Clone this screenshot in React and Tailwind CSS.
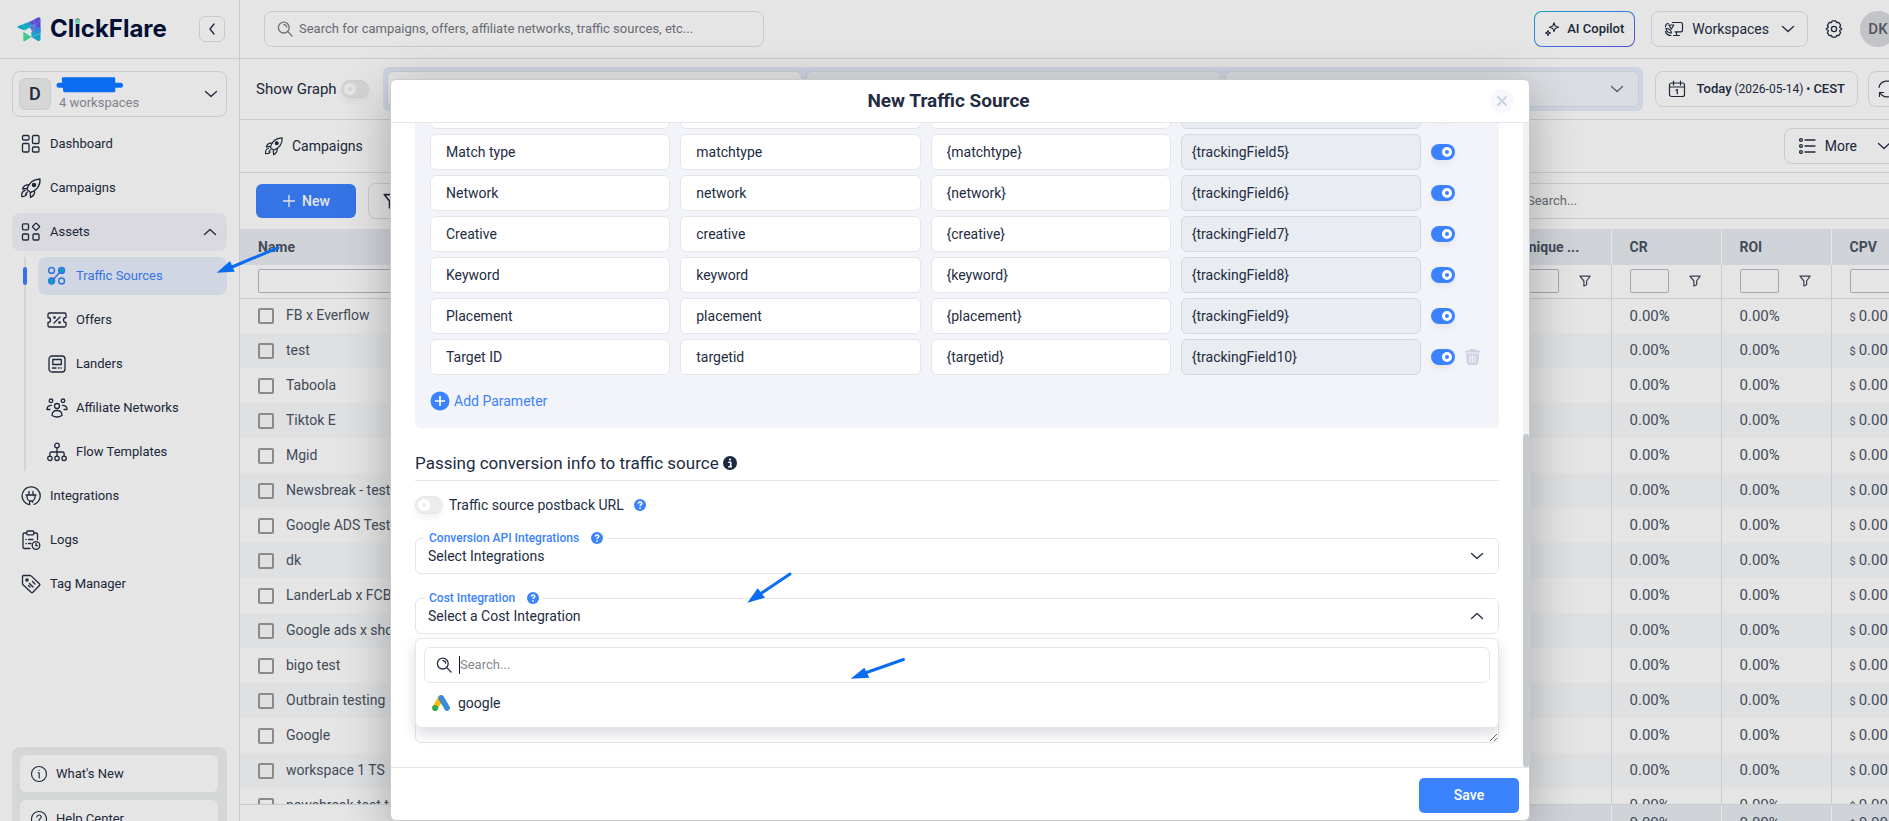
const cx = (...parts) => parts.filter(Boolean).join(" ");

function Icon({ size = 20, w = 1.3, children, className, box = 20 }) {
  return (
    <svg width={size} height={size} viewBox={`0 0 ${box} ${box}`} fill="none" stroke="currentColor" strokeWidth={w} strokeLinecap="round" strokeLinejoin="round" className={cx("shrink-0", className)} aria-hidden="true">
      {children}
    </svg>
  );
}

const Chevron = ({ up, className }) => (
  <svg width="14" height="8" viewBox="0 0 14 8" fill="none" stroke="currentColor" strokeWidth="1.3" strokeLinecap="round" strokeLinejoin="round" className={cx("shrink-0", className)} aria-hidden="true">
    <path d={up ? "M1.5 6.5 7 1.5l5.5 5" : "M1.5 1.5 7 6.5l5.5-5"} />
  </svg>
);

const DashboardIcon = () => (
  <Icon>
    <rect x="1.500" y="1.500" width="6.500" height="4.500" rx="1.200" />
    <rect x="11.500" y="1.500" width="6.500" height="8" rx="1.200" />
    <rect x="1.500" y="9.500" width="6.500" height="8.500" rx="1.200" />
    <rect x="11.500" y="13" width="6.500" height="5" rx="1.200" />
  </Icon>
);

const RocketIcon = ({ size = 22 }) => (
  <Icon size={size} box={22}>
    <path d="M7 12.500c1-4.500 4.500-10 13-10.500.5 7-4 12-9.500 13.500z" />
    <circle cx="14" cy="8" r="1.600" fill="currentColor" />
    <path d="M9 8C6 7.500 3.500 9 2.500 12l4-.5M14.500 13.500c.5 3-1 5.500-4 7l-.2-4.500" />
    <path d="M7.500 15 5.500 17M5 13.500c-2.500.5-3.500 3-3.300 6 2.500.2 4-.3 5-1.800" />
  </Icon>
);

const AssetsIcon = () => (
  <Icon>
    <rect x="1.500" y="1.800" width="6" height="6" rx="1" />
    <rect x="1.500" y="12" width="6" height="6" rx="1" />
    <rect x="12" y="12" width="6" height="6" rx="1" />
    <rect x="12.400" y="2" width="5.400" height="5.400" rx="1" transform="rotate(45 15.100 4.700)" />
  </Icon>
);

const SourcesIcon = () => (
  <Icon w={1.5}>
    <circle cx="4.600" cy="4.400" r="2.900" />
    <circle cx="14.600" cy="4.400" r="2.900" fill="#06b6d4" />
    <circle cx="4.600" cy="15" r="2.900" fill="#06b6d4" />
    <circle cx="14.600" cy="15" r="2.900" />
    <path d="M6.800 12.800 12.500 6.700" />
  </Icon>
);

const OffersIcon = () => (
  <Icon size={22} box={22}>
    <path d="M2 5.500q0-1.500 1.500-1.500h15q1.500 0 1.500 1.500v3a2.500 2.500 0 0 0 0 5v3q0 1.500-1.500 1.500h-15Q2 18 2 16.500v-3a2.500 2.500 0 0 0 0-5z" />
    <path d="m8 14 6-6" />
    <circle cx="8.500" cy="8.500" r=".7" fill="currentColor" />
    <circle cx="13.500" cy="13.500" r=".7" fill="currentColor" />
  </Icon>
);

const LandersIcon = () => (
  <Icon>
    <rect x="2" y="2" width="16" height="16" rx="3" />
    <rect x="5.800" y="5.500" width="8.500" height="5" />
    <path d="M5.500 14h3.500M11.500 14h.8M14.300 14h.2" />
  </Icon>
);

const NetworksIcon = () => (
  <Icon size={22} box={22}>
    <circle cx="11" cy="9" r="2.500" />
    <circle cx="5" cy="3.800" r="1.800" />
    <circle cx="17" cy="3.800" r="1.800" />
    <path d="M6 18.500c0-3.200 2-5 5-5s5 1.800 5 5q-5 3-10 0zM1 12.500C.8 10 2.500 8.300 5.500 8.300M21 12.500c.2-2.500-1.500-4.200-4.500-4.200M1 12.500h3M18 12.500h3" />
  </Icon>
);

const FlowIcon = () => (
  <Icon>
    <circle cx="10" cy="3.500" r="2.300" />
    <circle cx="2.900" cy="16.300" r="2.200" />
    <circle cx="10" cy="16.300" r="2.200" />
    <circle cx="17.100" cy="16.300" r="2.200" />
    <path d="M10 6v8M2.900 14v-2.500Q2.900 10 4.400 10h11.200q1.500 0 1.500 1.500V14" />
  </Icon>
);

const PlugIcon = () => (
  <Icon>
    <path d="M8.500 18.700a9 9 0 1 1 4.500-.3M5 9h10M6 9v2a4 4 0 0 0 8 0V9M8 9V5.500M12 9V5.500M8.600 15v3.700M11.600 15v1.200" />
  </Icon>
);

const LogsIcon = () => (
  <Icon>
    <path d="M5.500 3H3.300Q2 3 2 4.500v12.800Q2 18.500 3.300 18.500H9M13 3h2.200q1.300 0 1.300 1.500v5" />
    <rect x="5.800" y="1" width="7" height="3.800" rx="1" />
    <path d="M5 9.500h.2M7.500 9.500H12M5 13.500h.2M7.500 13.500H10" />
    <circle cx="15" cy="15.500" r="3.800" />
    <path d="M15 13.500v2.200h1.500" />
  </Icon>
);

const TagIcon = () => (
  <Icon>
    <path d="M1.500 2.800Q1.500 1.500 2.800 1.500H9q.8 0 1.400.6l8 7.600q.9.900 0 1.800l-6.500 6.700q-.9.900-1.800 0L2 10.800q-.5-.6-.5-1.400z" />
    <circle cx="6" cy="6" r="1.100" fill="currentColor" />
    <path d="m8.500 9.500 3.500 3.500M11.500 7.500 14 10M7.500 11.500l1.500 1.500" />
  </Icon>
);

const SearchIcon = ({ className }) => (
  <Icon size={16} box={16} className={className}>
    <circle cx="6.800" cy="6.600" r="5.400" />
    <path d="M10.800 10.600 15 15M6.800 3.600a3 3 0 0 1 2.900 2.600" />
  </Icon>
);

const FunnelIcon = ({ size = 12 }) => (
  <Icon size={size} box={12} w={1.2}>
    <path d="M.9 1.200h10.200L7.600 6v3.800L4.900 11V6z" />
  </Icon>
);

const HelpDot = () => (
  <svg width="12" height="12" viewBox="0 0 12 12" className="shrink-0" aria-hidden="true">
    <circle cx="6" cy="6" r="6" fill="#3b82ff" />
    <path d="M4.300 4.600C4.400 3.500 5 3 6 3c1.100 0 1.800.6 1.800 1.500C7.800 5.700 6 5.700 6 7" fill="none" stroke="#fff" strokeWidth="1.500" />
    <circle cx="6" cy="8.900" r=".9" fill="#fff" />
  </svg>
);

const Logo = () => (
  <svg width="25" height="25" viewBox="0 0 25 25" aria-hidden="true" className="shrink-0">
    <path d="M12 5.300 20.800.4q2.700-.8 2.700 1.800v9L12 8.500z" fill="#6352ea" />
    <path d="m11.800 5.300 6.200 3 5.500 3-8 4-2.500-5z" fill="#5b7df0" />
    <path d="M.8 9.200 11.800 5l1.700 5-1 5.500L.8 10.800Q0 10 .8 9.200z" fill="#0fb9d8" />
    <path d="m14 15.200 9.500-4.500v11.500q-.3 2.300-2.500 1.700L14.500 20z" fill="#1db3dd" />
    <path d="m14 15.200 9.500-4.500v5.500z" fill="#2f9be6" />
    <path d="M6.300 14.800 14.500 20l-7 4.200q-1.200.3-1.200-1z" fill="#48dd9b" />
    <path d="m7.500 13.800 5-3.300 1.800 4.700-.3 4z" fill="#fff" />
    <path d="M17 2.500 18 8.300l5.500-6M12 8.500l6-.2-2.500 7M6.500 7l1 6.500L13 10M14.500 20l9-3.800M10 17.500 6.500 20" fill="none" stroke="#fff" strokeOpacity=".35" strokeWidth=".7" />
  </svg>
);

const GoogleAdsIcon = () => (
  <svg width="18" height="16" viewBox="0 0 18 16" aria-hidden="true" className="shrink-0">
    <path d="M8.800 3 3.200 12.800" stroke="#fbbc04" strokeWidth="5.600" strokeLinecap="round" />
    <path d="M9.200 3 15 12.900" stroke="#3c8bd9" strokeWidth="5.800" strokeLinecap="round" />
    <circle cx="3.100" cy="13" r="3" fill="#34a853" />
  </svg>
);

function Toggle({ on, label, id }) {
  return on ? (
    <input id={id} type="checkbox" defaultChecked aria-label={label} className="flex h-4 w-6 shrink-0 appearance-none items-center justify-end rounded-full bg-[#3b82ff] pr-[3px] shadow-[0_4px_6px_rgba(0,0,0,0.05)] before:size-[10px] before:rounded-full before:border-[3px] before:border-white before:content-['']" />
  ) : (
    <input id={id} type="checkbox" aria-label={label} className="flex h-[18px] w-7 shrink-0 appearance-none items-center rounded-full border border-[#e6e6e6] bg-[#ececee] pl-0.5 shadow-[0_4px_6px_rgba(0,0,0,0.05)] before:size-3 before:rounded-full before:border-4 before:border-white before:bg-[#ececee] before:content-['']" />
  );
}

const navItem = "flex h-[38px] w-full items-center gap-2 rounded-lg px-2 text-[13px] text-[#232c42]";

function NavLink({ icon, children }) {
  return (
    <a href="#" className={navItem}>
      <span className="flex w-[22px] justify-center">{icon}</span>
      <span>{children}</span>
    </a>
  );
}

function Sidebar() {
  return (
    <aside className="flex w-60 shrink-0 flex-col border-r border-[#e1e3e7] bg-white">
      <div className="flex h-[59px] shrink-0 items-center border-b border-[#e1e3e7] pr-3.5 pl-[17px]">
        <Logo />
        <span className="relative ml-2 font-['Inter'] text-[24px] leading-none font-bold text-[#04123a]">
          Cl<span>i<i className="absolute top-0.5 left-[25px] size-[5px] rounded-full bg-[#7fe9bd]" /></span>ckFlare
        </span>
        <button aria-label="Collapse sidebar" className="ml-auto flex size-[26px] items-center justify-center rounded-md border border-[#e1e3e7] text-[#232c42]">
          <svg width="6" height="12" viewBox="0 0 6 12" fill="none" stroke="currentColor" strokeWidth="1.300" strokeLinecap="round" strokeLinejoin="round" aria-hidden="true"><path d="M5 1 1 6l4 5" /></svg>
        </button>
      </div>
      <div className="flex flex-1 flex-col px-3 pt-3">
        <button className="mb-2 flex h-[46px] items-center rounded-lg border border-[#e1e3e7] px-1.5 text-left">
          <span className="flex size-8 items-center justify-center rounded-md border border-[#e1e5e5] bg-[#eef0f0] text-lg font-medium text-[#232c42]">D</span>
          <span className="ml-2 pt-[18px] text-[13px] text-[#8d929c]">4 workspaces</span>
          <Chevron className="mr-0.5 ml-auto text-[#232c42]" />
        </button>
        <nav className="flex flex-col gap-1.5">
          <NavLink icon={<DashboardIcon />}>Dashboard</NavLink>
          <NavLink icon={<RocketIcon />}>Campaigns</NavLink>
          <button className={cx(navItem, "bg-[#f4f2fa]")}>
            <span className="flex w-[22px] justify-center"><AssetsIcon /></span>
            <span>Assets</span>
            <Chevron up className="mr-0.5 ml-auto" />
          </button>
          <div className="ml-3 flex flex-col gap-1.5 border-l-2 border-[#ededf0] pl-3">
            <a href="#" className="relative flex h-[38px] items-center gap-2 rounded-lg bg-[#e9effd] px-2 text-[13px] text-[#3b82ff]">
              <i className="absolute top-2.5 -left-[15px] h-[18px] w-1 rounded-sm bg-[#3b82ff]" />
              <span className="flex w-[22px] justify-center"><SourcesIcon /></span>
              <span>Traffic Sources</span>
            </a>
            {[["Offers", <OffersIcon />], ["Landers", <LandersIcon />], ["Affiliate Networks", <NetworksIcon />], ["Flow Templates", <FlowIcon />]].map(([name, icon]) => (
              <a key={name} href="#" className="flex h-[38px] items-center gap-2 rounded-lg px-2 text-[13px] text-[#232c42]">
                <span className="flex w-[22px] justify-center">{icon}</span>
                <span>{name}</span>
              </a>
            ))}
          </div>
          <NavLink icon={<PlugIcon />}>Integrations</NavLink>
          <NavLink icon={<LogsIcon />}>Logs</NavLink>
          <NavLink icon={<TagIcon />}>Tag Manager</NavLink>
        </nav>
        <div className="mt-auto -mb-6 flex flex-col gap-2 rounded-lg bg-[#eef0f0] p-2 pr-[9px] text-[13px] text-[#232c42]">
          <a href="#" className="flex h-[37px] items-center gap-2 rounded-md bg-white px-2.5">
            <Icon size={18} box={18} w={1.1}><circle cx="9" cy="9" r="7.500" /><path d="M8 7.800h1.200V13M9 5.200v.2" /></Icon>
            What's New
          </a>
          <a href="#" className="flex h-[37px] items-center gap-2 rounded-md bg-white px-2.5">
            <Icon size={18} box={18} w={1.1}><circle cx="9" cy="9" r="7.500" /><path d="M6.800 7.200C7 5.700 7.800 5 9 5c1.300 0 2.200.8 2.200 2C11.200 8.700 9 8.700 9 10.500M9 13v.1" /></Icon>
            Help Center
          </a>
        </div>
      </div>
    </aside>
  );
}

const outlineBtn = "flex h-9 items-center rounded-lg border border-[#e1e3e7] text-[#232c42]";

function Header() {
  return (
    <header className="flex h-[59px] shrink-0 items-center border-b border-[#e1e3e7] pr-6 pl-6">
      <label className="flex h-9 w-[500px] items-center rounded-lg border border-[#e1e3e7] pl-3 text-[#7a7f89]">
        <SearchIcon />
        <input type="text" aria-label="Search" placeholder="Search for campaigns, offers, affiliate networks, traffic sources, etc..." className="ml-1.5 flex-1 text-[13px] outline-none placeholder:text-[#75787f]" />
      </label>
      <button className="ml-auto h-9 rounded-lg bg-linear-to-br from-[#18b4d8] via-[#3b82ff] to-[#6352ea] p-px">
        <span className="flex h-full items-center gap-2 rounded-[7px] bg-white px-2.5 text-[13px] font-medium text-[#232c42]">
          <Icon size={14} box={14} w={1.1}>
            <path d="M9 .8 10.200 4l3.300 1.200-3.300 1.200L9 9.600 7.800 6.400 4.500 5.200 7.800 4zM3 8.500l.7 1.800 1.800.7-1.800.7L3 13.500l-.7-1.800L.5 11l1.800-.7z" />
          </Icon>
          AI Copilot
        </span>
      </button>
      <button className={cx(outlineBtn, "ml-4 px-3 text-[14px]")}>
        <Icon size={20} w={1.200}>
          <path d="M8.500 3.500h8.300q1.700 0 1.700 1.700v6q0 1.700-1.700 1.700H11M12.500 13v3.500M9.500 16.500h6" />
          <path d="m4.800 6 5 0-2.500 4zM1.500 8c0-2 .8-3.500 2.800-3.500M1.500 12.500c1 3 3 4 5.500 4M2 9.500c2 0 5 1 5.500 4.500C4.500 14 2.500 12.500 2 9.500z" />
        </Icon>
        <span className="mr-3 ml-2">Workspaces</span>
        <Chevron />
      </button>
      <button aria-label="Settings" className="ml-4 text-[#232c42]">
        <Icon size={20} w={1.300}>
          <path d="M7.200 3.600 8.300 1.900h3.400l1.100 1.700 2.100-.1 1.700 2.900-1 1.800 2.200 1.800-2.200 1.800 1 1.900-1.700 2.800-2.100-.1-1.100 1.700H8.300l-1.100-1.700-2.100.1-1.700-2.800 1-1.900L2.200 10l2.200-1.800-1-1.800 1.700-2.900z" />
          <circle cx="10" cy="10" r="2.600" />
        </Icon>
      </button>
      <button className="ml-4 size-9 rounded-full bg-[#d9dbdf] text-[15px] font-medium text-[#5c616b]">DK</button>
    </header>
  );
}

const filters = ["All workspaces", "All sources", "All campaigns"];

function Toolbar() {
  return (
    <>
      <div className="flex h-[61px] shrink-0 items-center border-b border-[#e1e3e7] pl-4">
        <label className="flex items-center gap-1 text-[15px] text-[#232c42]">
          Show Graph
          <Toggle label="Show Graph" />
        </label>
        <div className="ml-3.5 flex h-11 flex-1 items-center gap-1 rounded-md bg-[#e6ecfc] p-1">
          {filters.map((f, i) => (
            <div key={f} className={cx("relative flex h-9 flex-1 items-center rounded-md border border-[#dfe3ec]", i === 0 ? "bg-white" : "bg-[#f5f7fc]")}>
              <select aria-label={f} className="h-full w-full appearance-none pl-3 text-[13px] text-transparent outline-none"><option value=""></option></select>
              <Chevron className="pointer-events-none absolute right-[14px] text-[#5c6478]" />
            </div>
          ))}
        </div>
        <button className={cx(outlineBtn, "ml-3 px-3 text-[12px]")}>
          <Icon size={18} box={18} w={1.200}>
            <rect x="1.500" y="3" width="15" height="13.500" rx="2" />
            <path d="M1.500 7h15M5.500 1v4M12.500 1v4M8 10.200l1.300-.8v4.400" />
          </Icon>
          <span className="ml-2.5"><b className="text-[13px] font-medium">Today</b> (2026-05-14) • <b className="text-[13px] font-medium">CEST</b></span>
        </button>
        <button aria-label="Refresh" className={cx(outlineBtn, "mr-3.5 ml-2.5 px-2")}>
          <Icon size={20} w={1.200}>
            <path d="M2 8.500A8 8 0 0 1 17 6.500M18 11.500a8 8 0 0 1-15 2M17.500 2.500v4h-4M2.500 17.500v-4h4" />
          </Icon>
        </button>
      </div>
      <div className="flex h-[53px] shrink-0 items-center border-b border-[#e1e3e7] pl-6 text-[#232c42]">
        <RocketIcon size={20} />
        <span className="ml-2 text-[14px]">Campaigns</span>
        <button className={cx(outlineBtn, "mr-4 ml-auto px-3 text-[14px]")}>
          <Icon size={20} w={1.300}>
            <circle cx="4" cy="4" r="1.400" /><circle cx="4" cy="10" r="1.400" /><circle cx="4" cy="16" r="1.400" />
            <path d="M8 4h10M8 10h10M8 16h10" />
          </Icon>
          <span className="mr-5 ml-2">More</span>
          <Chevron />
        </button>
      </div>
      <div className="flex h-14 shrink-0 items-center pl-4">
        <button className="flex h-[34px] w-[100px] items-center justify-center gap-1.5 rounded-md bg-[#3b82ff] text-[14px] font-medium text-white">
          <Icon size={14} box={14} w={1.300}><path d="M7 1.500v11M1.500 7h11" /></Icon>
          New
        </button>
        <button aria-label="Filter" className={cx(outlineBtn, "ml-3 w-12 pl-3.5")}>
          <FunnelIcon size={16} />
        </button>
        <label className="ml-auto flex h-9 w-[432px] items-center rounded-lg border border-[#e1e3e7] pl-3 text-[#7a7f89]">
          <SearchIcon />
          <input type="text" aria-label="Search table" placeholder="Search..." className="ml-2.5 flex-1 text-[13px] outline-none placeholder:text-[#75787f]" />
        </label>
      </div>
    </>
  );
}

const rows = ["FB x Everflow", "test", "Taboola", "Tiktok E", "Mgid", "Newsbreak - test", "Google ADS Test", "dk", "LanderLab x FCB", "Google ads x shop", "bigo test", "Outbrain testing", "Google", "workspace 1 TS", "newsbreak test ts"];
const cellX = "w-[110px] border-l border-[#e1e3e7] pl-[18px]";
const footCell = "w-[110px] border-l border-white bg-[#e8ecf2] pl-[18px]";

const Money = () => <><span className="mr-[3px] text-[11px]">$</span>0.00</>;

function DataTable() {
  return (
    <>
      <div className="-mr-[21px] flex-1 overflow-hidden">
        <table className="w-full table-fixed border-collapse text-[15px] text-[#4b5464]">
          <thead>
            <tr className="h-9 bg-[#e8ecf2] text-left text-[14px]">
              <th className="pl-[18px] font-bold">Name</th>
              {["Unique ...", "CR", "ROI", "CPV"].map((h) => <th key={h} className="w-[110px] border-l border-white pl-[18px] font-bold">{h}</th>)}
            </tr>
            <tr className="h-[33px] border-b border-[#e1e3e7]">
              <td className="px-[18px]"><input type="text" aria-label="Filter by name" className="block h-6 w-full rounded-xs border border-[#b4bac6]" /></td>
              {["Unique", "CR", "ROI"].map((h) => (
                <td key={h} className={cellX}>
                  <div className="flex items-center gap-5 text-[#3e485c]">
                    <input type="text" aria-label={`Filter by ${h}`} className="h-6 w-[39px] rounded-xs border border-[#b4bac6]" />
                    <FunnelIcon />
                  </div>
                </td>
              ))}
              <td className={cellX}><input type="text" aria-label="Filter by CPV" className="block h-6 w-[70px] rounded-xs border border-[#b4bac6]" /></td>
            </tr>
          </thead>
          <tbody>
            {rows.map((r) => (
              <tr key={r} className="h-[35px] even:bg-[#f8fafc]">
                <td className="pl-[18px]">
                  <label className="flex items-center gap-3 text-[14px]">
                    <input type="checkbox" className="size-4 appearance-none rounded-xs border-2 border-[#9c9a98]" />
                    {r}
                  </label>
                </td>
                <td className={cellX}>0</td>
                <td className={cellX}>0.00%</td>
                <td className={cellX}>0.00%</td>
                <td className={cellX}><Money /></td>
              </tr>
            ))}
          </tbody>
        </table>
      </div>
      <div className="-mr-[21px] -mb-5 h-[37px] shrink-0 border-t border-[#dfe2ea]">
        <table className="w-full table-fixed border-collapse text-[15px] text-[#4b5464]">
          <tbody>
            <tr className="h-9">
              <td className="w-[600px]" />
              <td className="bg-[#e8ecf2]" />
              <td className={footCell}>0.00%</td>
              <td className={footCell}>0.00%</td>
              <td className={footCell}><Money /></td>
            </tr>
          </tbody>
        </table>
      </div>
    </>
  );
}

const params = [
  ["Campaign ID", "campaignid", 3],
  ["Ad group ID", "adgroupid", 4],
  ["Match type", "matchtype", 5],
  ["Network", "network", 6],
  ["Creative", "creative", 7],
  ["Keyword", "keyword", 8],
  ["Placement", "placement", 9],
  ["Target ID", "targetid", 10],
];
const field = "h-9 min-w-0 rounded-md border text-[14px] text-[#232c42]";

function SelectField({ id, label, value, up }) {
  return (
    <div className="relative mb-6 flex h-9 items-center">
      <label htmlFor={id} className="absolute -top-2 left-2.5 flex items-center gap-3 bg-white px-1 text-[12px] leading-4 font-medium text-[#3b82ff]">
        {label}
        <HelpDot />
      </label>
      <select id={id} className="h-9 w-full appearance-none rounded-md border border-[#e4e6ea] pl-3 text-[14px] text-[#232c42] outline-none">
        <option>{value}</option>
      </select>
      <Chevron up={up} className="pointer-events-none absolute right-[15px] text-[#232c42]" />
    </div>
  );
}

function Modal() {
  return (
    <div role="dialog" aria-labelledby="dlg-title" className="flex w-[1140px] flex-col overflow-hidden rounded-md border border-[#c9cacc] bg-white shadow-[0_11px_50px_rgba(0,0,0,0.28)]">
      <div className="flex h-[43px] shrink-0 items-center border-b border-[#e4e6ea] pr-[15px] pl-4">
        <h2 id="dlg-title" className="flex-1 text-center text-[19px] font-bold text-[#232c42]">New Traffic Source</h2>
        <button aria-label="Close" className="flex size-6 items-center justify-center rounded-full bg-[#f7f8fb] text-[#cdd3e6]">
          <Icon size={12} box={12} w={2}><path d="m2 2 8 8M10 2l-8 8" /></Icon>
        </button>
      </div>
      <div className="flex min-h-0 flex-1">
        <div className="flex flex-1 flex-col justify-end overflow-hidden px-6 pb-6">
          <div className="rounded-md bg-[#f3f4fa] px-[15px] pb-[17px]">
            <div className="flex flex-col gap-[5px]">
              {params.map(([name, key, n]) => (
                <div key={key} className="flex items-center">
                  <div className="grid flex-1 grid-cols-4 gap-2.5">
                    <input type="text" aria-label={`${name} name`} defaultValue={name} className={cx(field, "border-[#e4e6ea] bg-white pl-[15px]")} />
                    <input type="text" aria-label={`${name} query`} defaultValue={key} className={cx(field, "border-[#e4e6ea] bg-white pl-[15px]")} />
                    <input type="text" aria-label={`${name} token`} defaultValue={`{${key}}`} className={cx(field, "border-[#e4e6ea] bg-white pl-[15px]")} />
                    <input type="text" readOnly aria-label={`${name} tracking field`} defaultValue={`{trackingField${n}}`} className={cx(field, "border-[#d5d9de] bg-[#e9ecf1] pl-2.5")} />
                  </div>
                  <div className="flex w-[63px] items-center gap-2.5 pl-2.5">
                    <Toggle on label={`${name} enabled`} />
                    {n === 10 && (
                      <button aria-label="Delete parameter">
                        <svg width="15" height="16" viewBox="0 0 15 16" fill="#ced2e3" aria-hidden="true">
                          <path d="M5 0h5l.8 1.500H14.500q.5 0 .5.600V3.500H0V2.100q0-.6.5-.6H4.200zM1 4.500h13L13.300 14q-.2 2-2 2H3.700q-1.800 0-2-2zM4.500 6.500v7h1.200v-7zM6.900 6.500v7h1.200v-7zM9.300 6.500v7h1.200v-7z" fillRule="evenodd" />
                        </svg>
                      </button>
                    )}
                  </div>
                </div>
              ))}
            </div>
            <button className="mt-4 flex items-center gap-1 text-[14px] leading-5 text-[#3b82ff]">
              <svg width="20" height="20" viewBox="0 0 20 20" aria-hidden="true"><circle cx="10" cy="10" r="9.500" fill="#3b82ff" /><path d="M10 5v10M5 10h10" stroke="#fff" strokeWidth="1.700" /></svg>
              Add Parameter
            </button>
          </div>
          <h3 className="mt-6 flex items-center gap-1 border-b border-[#e4e6ea] pb-1.5 text-[17px] leading-[22px] text-[#232c42]">
            Passing conversion info to traffic source
            <svg width="14" height="14" viewBox="0 0 14 14" aria-hidden="true"><circle cx="7" cy="7" r="7" fill="#1c2740" /><path d="M5.300 6.200h2.400v4M5.200 10.700h3.800" fill="none" stroke="#fff" strokeWidth="1.600" /><circle cx="7" cy="3.500" r="1.100" fill="#fff" /></svg>
          </h3>
          <div className="mt-[15px] mb-6 flex items-center gap-1.5">
            <Toggle id="postback" label="Traffic source postback URL" />
            <label htmlFor="postback" className="mr-1 text-[14px] leading-[18px] text-[#232c42]">Traffic source postback URL</label>
            <HelpDot />
          </div>
          <SelectField id="capi" label="Conversion API Integrations" value="Select Integrations" />
          <SelectField id="cost" label="Cost Integration" value="Select a Cost Integration" up />
          <div className="relative">
            <textarea aria-label="Notes" className="block h-[85px] w-full rounded-md border border-[#e4e6ea]" />
            <div className="absolute inset-x-0 -top-5 flex h-[90px] flex-col rounded-md border border-[#e4e6ea] bg-white p-2 shadow-[0_6px_14px_rgba(40,40,70,0.16)]">
              <label className="flex h-9 shrink-0 items-center rounded-md border border-[#e4e6ea] pl-[11px] text-[#232c42]">
                <SearchIcon />
                <i className="ml-[7px] h-[18px] w-px bg-[#111827]" />
                <input type="text" aria-label="Search integrations" placeholder="Search..." className="flex-1 text-[13px] outline-none placeholder:text-[#85888f]" />
              </label>
              <button className="flex h-10 shrink-0 items-center gap-2 px-2 text-[14px] text-[#232c42]">
                <GoogleAdsIcon />
                google
              </button>
            </div>
          </div>
        </div>
        <div className="flex w-1.5 flex-col justify-end bg-[#eff1f3]">
          <div className="h-[333px] rounded-full bg-[#c6cad0]" />
        </div>
      </div>
      <div className="flex shrink-0 justify-end border-t border-[#e4e6ea] px-2.5 pt-2.5 pb-[7px]">
        <button className="h-[35px] w-[100px] rounded-[5px] bg-[#3b82ff] text-[14px] font-medium text-white">Save</button>
      </div>
    </div>
  );
}

function Annotations() {
  return (
    <svg width="960" height="720" viewBox="0 0 960 720" className="pointer-events-none absolute top-0 left-0" fill="#0a6cf1" stroke="#0a6cf1" aria-hidden="true">
      <path d="M278 247.800 232 267" strokeWidth="3" strokeLinecap="round" />
      <path d="M216.700 272.700 230 261l4.700 10.700z" stroke="none" />
      <path d="M790 574 762 592.700" strokeWidth="3" strokeLinecap="round" />
      <path d="m747.300 602.700 10.400-14.400 7.300 9.400z" stroke="none" />
      <path d="m903.500 659.500-37 13" strokeWidth="3" strokeLinecap="round" />
      <path d="m850.700 678.700 13.600-11 5 10z" stroke="none" />
      <path d="M59 85.300h61.500" strokeWidth="5" strokeLinecap="round" />
      <path d="M63 78.500h51v12.500H64.500z" strokeWidth="2.500" strokeLinejoin="round" />
    </svg>
  );
}

export default function App() {
  return (
    <div className="h-screen overflow-hidden bg-white font-['Roboto','Liberation_Sans',sans-serif]">
      <div className="relative flex h-screen min-w-[1920px] overflow-hidden">
        <Sidebar />
        <main className="flex h-screen min-w-0 flex-1 flex-col">
          <Header />
          <Toolbar />
          <DataTable />
        </main>
        <div className="absolute inset-0 flex justify-center bg-black/10 pt-[79px]">
          <Modal />
        </div>
        <Annotations />
      </div>
    </div>
  );
}
